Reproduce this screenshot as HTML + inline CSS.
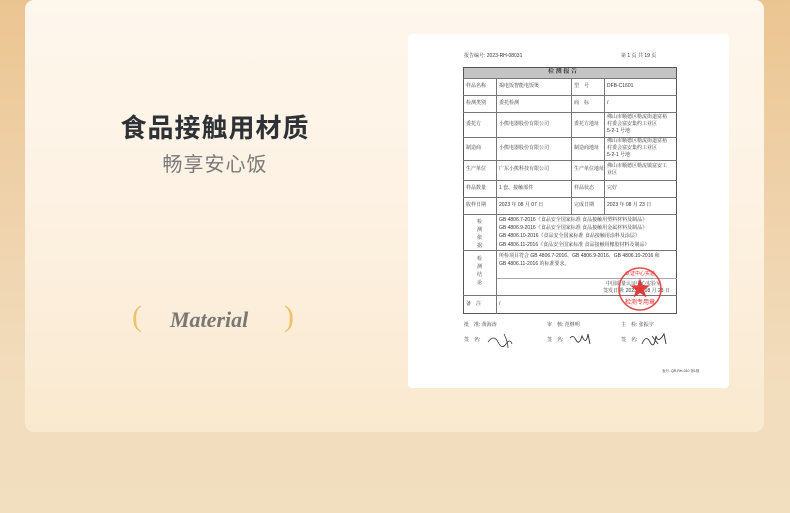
<!DOCTYPE html>
<html><head><meta charset="utf-8"><style>
*{margin:0;padding:0;box-sizing:border-box}
body{width:790px;height:513px;overflow:hidden;position:relative;background:linear-gradient(180deg,#ebc591 0%,#efd2ab 40%,#f2ddbd 75%,#f1dfc0 100%);font-family:"Liberation Sans","Noto Sans CJK SC",sans-serif}
.card{position:absolute;left:25px;top:0;width:739px;height:432px;border-radius:9px;background:linear-gradient(180deg,#fef7ed 0%,#fdf1e2 50%,#f9e9cf 100%)}
.t1{position:absolute;left:100px;width:230px;top:108px;text-align:center;font-size:26px;font-weight:bold;color:#2e3236;letter-spacing:1px}
.t2{position:absolute;left:100px;width:230px;top:148px;text-align:center;font-size:20px;color:#7a7a7a;letter-spacing:1px}
.mat{position:absolute;left:170px;top:307px;font-family:"Liberation Serif",serif;font-style:italic;font-weight:bold;font-size:22px;color:#7a7774}
.par{position:absolute;top:300px;font-family:"Liberation Serif",serif;font-size:30px;color:#f0c06a}
.paper{position:absolute;left:408px;top:34px;width:321px;height:354px;background:#fff;border-radius:4px}
.c{position:absolute;font-size:5px;color:#333;white-space:nowrap;line-height:7px;font-family:"Liberation Sans","Noto Serif CJK SC",serif}
.hl{position:absolute;height:1px;background:#777}
.vl{position:absolute;width:1px;background:#777}
</style></head><body>
<div class="card"></div>
<div class="t1">食品接触用材质</div>
<div class="t2">畅享安心饭</div>
<div class="par" style="left:132px">(</div>
<div class="mat">Material</div>
<div class="par" style="left:284px">)</div>
<div class="paper"></div>
<div class="c" style="left:464px;top:53px">报告编号: 2023-RH-08031</div>
<div class="c" style="left:621px;top:53px">第 1 页 共 19 页</div>
<div style="position:absolute;left:463px;top:67px;width:214px;height:247px;border:1.5px solid #555"></div>
<div style="position:absolute;left:464px;top:68px;width:212px;height:10px;background:#c4c4c4"></div>
<div class="c" style="left:548px;top:69px;font-weight:bold;font-size:6px">检 测 报 告</div>
<div class="hl" style="left:463px;width:214px;top:78px"></div>
<div class="hl" style="left:463px;width:214px;top:95px"></div>
<div class="hl" style="left:463px;width:214px;top:112px"></div>
<div class="hl" style="left:463px;width:214px;top:137px"></div>
<div class="hl" style="left:463px;width:214px;top:160px"></div>
<div class="hl" style="left:463px;width:214px;top:180px"></div>
<div class="hl" style="left:463px;width:214px;top:197px"></div>
<div class="hl" style="left:463px;width:214px;top:214px"></div>
<div class="hl" style="left:463px;width:214px;top:250px"></div>
<div class="hl" style="left:496px;width:181px;top:278px;background:#aaa"></div>
<div class="hl" style="left:463px;width:214px;top:295px"></div>
<div class="vl" style="left:496px;top:78px;height:236px"></div>
<div class="vl" style="left:571px;top:78px;height:136px"></div>
<div class="vl" style="left:604px;top:78px;height:136px"></div>
<div class="c" style="left:466px;top:83px">样品名称</div><div class="c" style="left:499px;top:83px">揭电饭智能电饭煲</div><div class="c" style="left:574px;top:83px">型　号</div><div class="c" style="left:607px;top:83px">DFB-C1601</div>
<div class="c" style="left:466px;top:100px">检测类别</div><div class="c" style="left:499px;top:100px">委托检测</div><div class="c" style="left:574px;top:100px">商　标</div><div class="c" style="left:607px;top:100px">/</div>
<div class="c" style="left:466px;top:121px">委托方</div><div class="c" style="left:499px;top:121px">小熊电器股份有限公司</div><div class="c" style="left:574px;top:121px">委托方地址</div><div class="c" style="left:607px;top:114px">佛山市顺德区勒流街道富裕<br>村委会富安集约工业区<br>5-2-1 号地</div>
<div class="c" style="left:466px;top:145px">制造商</div><div class="c" style="left:499px;top:145px">小熊电器股份有限公司</div><div class="c" style="left:574px;top:145px">制造商地址</div><div class="c" style="left:607px;top:138px">佛山市顺德区勒流街道富裕<br>村委会富安集约工业区<br>5-2-1 号地</div>
<div class="c" style="left:466px;top:166px">生产单位</div><div class="c" style="left:499px;top:166px">广东小熊科技有限公司</div><div class="c" style="left:574px;top:166px">生产单位地址</div><div class="c" style="left:607px;top:163px">佛山市顺德区勒流镇富安工<br>业区</div>
<div class="c" style="left:466px;top:185px">样品数量</div><div class="c" style="left:499px;top:185px">1 套、接触部件</div><div class="c" style="left:574px;top:185px">样品状态</div><div class="c" style="left:607px;top:185px">完好</div>
<div class="c" style="left:466px;top:202px">收样日期</div><div class="c" style="left:499px;top:202px">2023 年 08 月 07 日</div><div class="c" style="left:574px;top:202px">完成日期</div><div class="c" style="left:607px;top:202px">2023 年 08 月 23 日</div>
<div class="c" style="left:477px;top:218px;line-height:8px">检<br>测<br>依<br>据</div>
<div class="c" style="left:499px;top:216px;line-height:8.2px">GB 4806.7-2016《食品安全国家标准 食品接触用塑料材料及制品》<br>GB 4806.9-2016《食品安全国家标准 食品接触用金属材料及制品》<br>GB 4806.10-2016《食品安全国家标准 食品接触用涂料及涂层》<br>GB 4806.11-2016《食品安全国家标准 食品接触用橡胶材料及制品》</div>
<div class="c" style="left:477px;top:255px;line-height:8px">检<br>测<br>结<br>论</div>
<div class="c" style="left:499px;top:252px;line-height:8px">所检项目符合 GB 4806.7-2016、GB 4806.9-2016、GB 4806.10-2016 和<br>GB 4806.11-2016 的标准要求。</div>
<div class="c" style="left:606px;top:281px">中国质量认证中心实验室</div>
<div class="c" style="left:603px;top:288px">签发日期: 2023 年 08 月 23 日</div>
<div class="c" style="left:466px;top:301px">备　注</div><div class="c" style="left:499px;top:301px">/</div>
<svg style="position:absolute;left:616px;top:265px" width="48" height="48" viewBox="0 0 48 48"><circle cx="24" cy="24" r="21" fill="none" stroke="#e03030" stroke-width="1.6" opacity=".85"/><polygon points="24,13 26.5,20.5 34,20.5 28,25 30.5,32.5 24,28 17.5,32.5 20,25 14,20.5 21.5,20.5" fill="#e02828" opacity=".9"/><text x="24" y="39" font-size="6" fill="#e03030" text-anchor="middle" font-family="Noto Sans CJK SC,sans-serif">检测专用章</text><text x="24" y="10" font-size="5" fill="#e03030" text-anchor="middle" font-family="Noto Sans CJK SC,sans-serif">认证中心实验</text></svg>
<div class="c" style="left:464px;top:322px">批　准: 黄海涛</div>
<div class="c" style="left:547px;top:322px">审　核: 范继明</div>
<div class="c" style="left:621px;top:322px">主　检: 张振宇</div>
<div class="c" style="left:464px;top:337px">签　名:</div>
<div class="c" style="left:547px;top:337px">签　名:</div>
<div class="c" style="left:621px;top:337px">签　名:</div>
<svg style="position:absolute;left:486px;top:330px" width="200" height="20"><path d="M2 12 q6 -8 10 0 t8 2 q4 -6 6 0 M18 4 q4 8 4 14" stroke="#333" fill="none" stroke-width=".8"/><path d="M84 8 q3 -4 6 2 t6 -4 q4 10 6 -2 l2 10" stroke="#333" fill="none" stroke-width=".9"/><path d="M156 14 q4 -10 8 -2 t6 -6 q2 8 8 -2 l2 10 M166 6 l6 8" stroke="#333" fill="none" stroke-width=".9"/></svg>
<div class="c" style="left:662px;top:368px;font-size:3.5px">表号: QR-RH-010 第1版</div>
</body></html>
